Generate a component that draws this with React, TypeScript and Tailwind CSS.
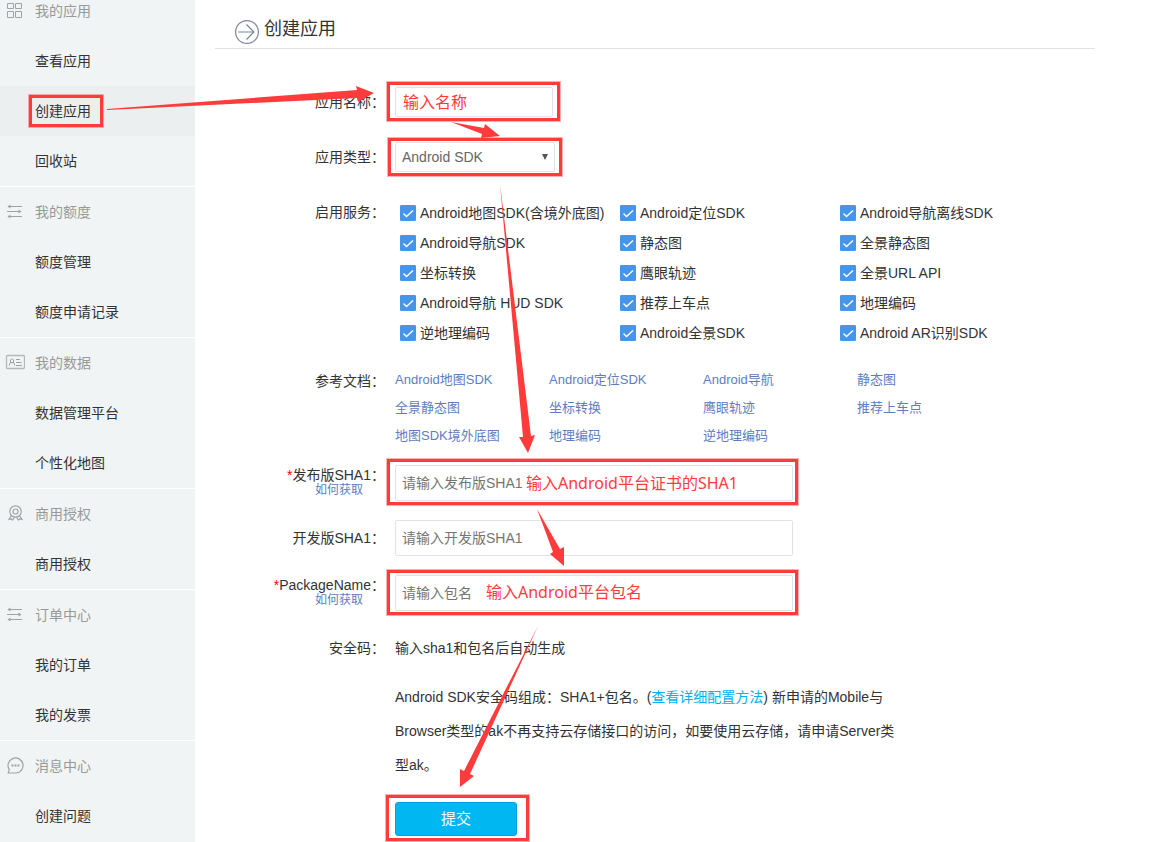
import { useState } from "react";
import type { ReactNode } from "react";

const menu = [
  { title: "我的应用", icon: "grid", items: ["查看应用", "创建应用", "回收站"] },
  { title: "我的额度", icon: "lines", items: ["额度管理", "额度申请记录"] },
  { title: "我的数据", icon: "card", items: ["数据管理平台", "个性化地图"] },
  { title: "商用授权", icon: "medal", items: ["商用授权"] },
  { title: "订单中心", icon: "lines", items: ["我的订单", "我的发票"] },
  { title: "消息中心", icon: "chat", items: ["创建问题"] },
];

const services = [
  "Android地图SDK(含境外底图)",
  "Android定位SDK",
  "Android导航离线SDK",
  "Android导航SDK",
  "静态图",
  "全景静态图",
  "坐标转换",
  "鹰眼轨迹",
  "全景URL API",
  "Android导航 HUD SDK",
  "推荐上车点",
  "地理编码",
  "逆地理编码",
  "Android全景SDK",
  "Android AR识别SDK",
];

const docs = [
  "Android地图SDK",
  "Android定位SDK",
  "Android导航",
  "静态图",
  "全景静态图",
  "坐标转换",
  "鹰眼轨迹",
  "推荐上车点",
  "地图SDK境外底图",
  "地理编码",
  "逆地理编码",
];

function MenuIcon({ name }: { name: string }) {
  return (
    <svg viewBox="0 0 20 18" className="w-5 h-[18px] shrink-0" fill="none" stroke="#a0a3a5">
      {name === "grid" && (
        <path d="M2.5 1.5h6v5h-6zM10.5 1.5h6v5h-6zM2.5 9.5h6v6h-6zM10.5 9.5h6v6h-6z" />
      )}
      {name === "lines" && (
        <>
          <path d="M3 3.5h14M2 8.5h14M3 13.5h14" />
          <path d="M5.5 1.5v4L2.500 3.500zM13.500 6.500v4l3-2zM5.500 11.500v4l-3-2z" fill="#a0a3a5" stroke="none" />
        </>
      )}
      {name === "card" && (
        <>
          <rect x="1.5" y="1.5" width="18" height="13" rx="1" strokeWidth="1.3" stroke="#b4b8ba" />
          <path d="M4.5 11.5V10l1-1V6l1-1h1l1 1v3l1 1v1.5M5.5 8.5h3M11 5.5h4M11 8.500h5.500M11 11.500h6" />
        </>
      )}
      {name === "medal" && (
        <>
          <circle cx="10.5" cy="6.5" r="5.7" strokeWidth="1.2" />
          <circle cx="10.5" cy="6.5" r="2.5" strokeWidth="1.2" />
          <path d="M6.5 10.5l-2.500 4 2.500-.5 1 1 2-2.500M14.500 10.500l2.500 4-2.500-.5-1 1-2-2.500" strokeWidth="1.2" />
        </>
      )}
      {name === "chat" && (
        <>
          <path d="M10.5 16A7.500 7.500 0 1 0 4.300 12.700L3.200 16z" strokeWidth="1.200" />
          <path d="M6.5 8.500h2M9.500 8.500h2M12.500 8.500h2" strokeWidth="1.800" />
        </>
      )}
    </svg>
  );
}

function Highlight({ className }: { className: string }) {
  return <span className={`absolute border-3 border-[#ff3b3b] ring-1 ring-[#ff3b3b]/40 pointer-events-none ${className}`} />;
}

function Row({ label, id, required, help, tall, className, children }: {
  label: string;
  id?: string;
  required?: boolean;
  help?: boolean;
  tall?: boolean;
  className: string;
  children: ReactNode;
}) {
  const leading = help ? "leading-5" : tall ? "leading-9" : "leading-[30px]";
  const text = (
    <>
      {required && <span className="text-[#e00]">*</span>}
      {label}
    </>
  );

  return (
    <div className={`flex gap-2.5 ${className}`}>
      <div className={`w-[170px] shrink-0 text-right ${leading}`}>
        {id ? <label htmlFor={id} className="block">{text}</label> : <span className="block">{text}</span>}
        {help && (
          <a href="#help" className="block pr-[22px] text-xs leading-[10px] text-[#5e7dbf]">如何获取</a>
        )}
      </div>
      {children}
    </div>
  );
}

export default function App() {
  const [checked, setChecked] = useState<string[]>(services);

  const toggle = (name: string) => {
    setChecked(checked.includes(name) ? checked.filter((s) => s !== name) : [...checked, name]);
  };

  const field = "block border border-[#dfe3e9] rounded-xs bg-white px-1.5 text-sm placeholder:text-[#757575] outline-none";
  const note = "absolute whitespace-nowrap pointer-events-none text-base leading-6 text-[#ff3b3b] font-['Noto_Sans','Noto_Sans_CJK_SC',sans-serif]";

  return (
    <div className="relative flex overflow-hidden bg-white text-sm text-[#333] font-['Liberation_Sans','Noto_Sans_CJK_SC',sans-serif]">
      {/* Sidebar, scrolled a little past its first heading */}
      <nav className="-mt-3.5 w-[195px] shrink-0 bg-[#f0f4f5]">
        {menu.map((section) => (
          <section key={section.title} className="border-b border-white last:border-b-0">
            <h2 className="flex items-center gap-2.5 h-[50px] pl-[5px] text-[#999]">
              <MenuIcon name={section.icon} />
              {section.title}
            </h2>
            {section.items.map((item) => (
              <a
                key={item}
                href="#menu"
                className={`flex items-center h-[50px] pl-[35px] ${item === "创建应用" ? "bg-[#ebeff0]" : ""}`}
              >
                <span className="relative">
                  {item}
                  {item === "创建应用" && <Highlight className="-left-1.5 -right-3 -top-1.5 -bottom-1.5" />}
                </span>
              </a>
            ))}
          </section>
        ))}
      </nav>

      <main className="flex-1 min-w-0 pl-5 pr-[54px]">
        {/* Page title */}
        <header className="flex h-[49px] items-start gap-[5px] border-b border-[#dfe3e9] pl-5">
          <svg viewBox="0 0 24 24" className="mt-5 size-6" fill="none" stroke="#7b8796" strokeWidth="1.2">
            <circle cx="12" cy="12" r="11.4" />
            <path d="M3 12h16M11.5 4.5L19 12l-7.5 7.5" />
          </svg>
          <h1 className="text-lg leading-[30px] mt-3.5">创建应用</h1>
        </header>

        <form className="pt-[38px]" onSubmit={(e) => e.preventDefault()}>
          <Row label="应用名称：" id="name" className="mb-[25px]">
            <div className="relative">
              <input id="name" type="text" className={`${field} w-[158px] h-[30px]`} />
              <span className={`${note} left-2 top-[3px]`}>输入名称</span>
              <Highlight className="-left-2 -right-[7px] -top-[5px] -bottom-1" />
            </div>
          </Row>

          <Row label="应用类型：" id="type" className="mb-[25px]">
            <div className="relative">
              <select id="type" className={`${field} w-[160px] h-[30px] appearance-none text-[#666]`}>
                <option>Android SDK</option>
              </select>
              <svg viewBox="0 0 6 6" className="absolute right-[7px] top-3 size-1.5 pointer-events-none">
                <path d="M0 0h6L3 6z" fill="#555" />
              </svg>
              <Highlight className="-inset-x-[7px] -top-1 -bottom-1" />
            </div>
          </Row>

          {/* Enabled services */}
          <Row label="启用服务：" className="mb-[18px]">
            <div className="grid grid-cols-[repeat(3,220px)] pl-[5px] pt-px">
              {services.map((name) => (
                <label key={name} className="flex items-center gap-1 h-[30px] whitespace-nowrap">
                  <span className="relative size-4">
                    <input
                      type="checkbox"
                      checked={checked.includes(name)}
                      onChange={() => toggle(name)}
                      className="block size-4 appearance-none rounded-[1px] border border-[#4595ea] checked:bg-[#4595ea]"
                    />
                    <svg viewBox="0 0 16 16" className="absolute inset-0 pointer-events-none" fill="none" stroke="#fff" strokeWidth="1.4">
                      <path d="M3.5 8.5l3 3 6.500-6" />
                    </svg>
                  </span>
                  {name}
                </label>
              ))}
            </div>
          </Row>

          {/* Reference docs */}
          <Row label="参考文档：" className="mb-[15px]">
            <div className="grid grid-cols-[repeat(4,154px)] text-[13px] leading-7 text-[#5e7dbf]">
              {docs.map((doc) => (
                <a key={doc} href="#doc">{doc}</a>
              ))}
            </div>
          </Row>

          <Row label="发布版SHA1：" id="release" required help className="mb-[19px]">
            <div className="relative">
              <input id="release" type="text" placeholder="请输入发布版SHA1" className={`${field} w-[398px] h-9`} />
              <span className={`${note} left-[131px] top-1.5`}>输入Android平台证书的SHA1</span>
              <Highlight className="-left-2 -right-[5px] -top-1.5 -bottom-1" />
            </div>
          </Row>

          <Row label="开发版SHA1：" id="dev" tall className="mb-[19px]">
            <input id="dev" type="text" placeholder="请输入开发版SHA1" className={`${field} w-[398px] h-9`} />
          </Row>

          <Row label="PackageName：" id="package" required help className="mb-[22px]">
            <div className="relative">
              <input id="package" type="text" placeholder="请输入包名" className={`${field} w-[398px] h-9`} />
              <span className={`${note} left-[91px] top-[5px]`}>输入Android平台包名</span>
              <Highlight className="-left-2 -right-[5px] -top-[5px] -bottom-1" />
            </div>
          </Row>

          <Row label="安全码：" className="mb-[17px]">
            <span className="leading-[30px]">输入sha1和包名后自动生成</span>
          </Row>

          <div className="ml-[180px] max-w-[504px]">
            <p className="leading-[34px]">
              Android SDK安全码组成：SHA1+包名。(
              <a href="#config" className="text-[#00b0f0]">查看详细配置方法</a>
              ) 新申请的Mobile与Browser类型的ak不再支持云存储接口的访问，如要使用云存储，请申请Server类型ak。
            </p>
            <div className="relative mt-5 mb-1.5 w-[122px]">
              <button type="submit" className="block w-full h-[34px] rounded-[3px] border border-[#009fe0] bg-[#00b7f1] text-[15px] text-white">
                提交
              </button>
              <Highlight className="-left-[9px] -right-3 -top-[7px] -bottom-[5px]" />
            </div>
          </div>
        </form>
      </main>

      {/* Arrows that lead from one step to the next */}
      <svg width="1149" height="842" className="absolute left-0 top-0 pointer-events-none" fill="#ff3b3b">
        <path d="M107 109L357 90L356 86L374 93L358 102L357 98L210 105L107 110z" />
        <path d="M451 122L484 128L485 124L500 136L481 138L482 134z" />
        <path d="M500 184L531 436L535 435L528 453L519 437L523 437z" />
        <path d="M537 509L560 549L564 547L564 566L550 554L553 552z" />
        <path d="M538 626L470 774L474 776L460 787L460 769L464 771z" />
      </svg>
    </div>
  );
}
